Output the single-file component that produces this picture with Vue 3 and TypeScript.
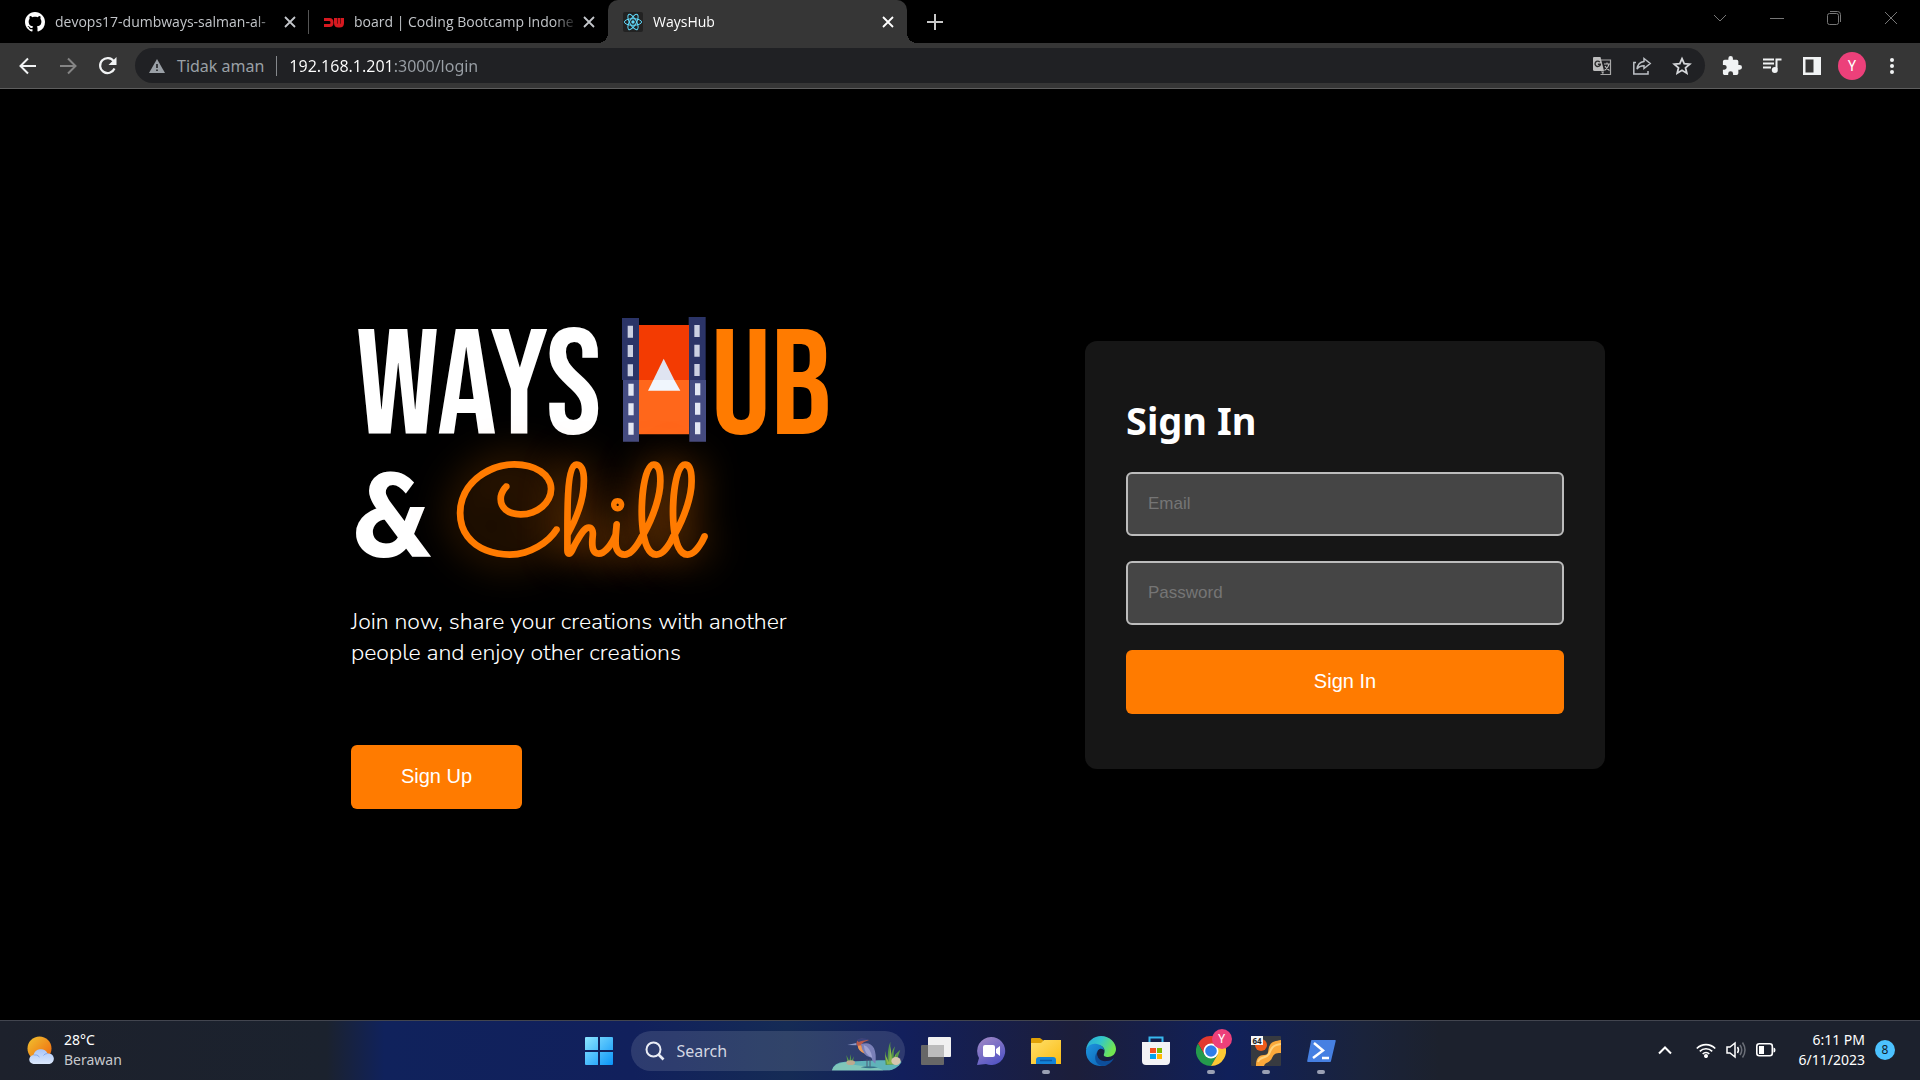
<script setup lang="ts">
import { ref } from 'vue'

interface Tab {
  id: string
  title: string
  icon: 'github' | 'dw' | 'react'
  active: boolean
}

const tabs: Tab[] = [
  { id: 'repo', title: 'devops17-dumbways-salman-al-', icon: 'github', active: false },
  { id: 'board', title: 'board | Coding Bootcamp Indone', icon: 'dw', active: false },
  { id: 'app', title: 'WaysHub', icon: 'react', active: true },
]

const address = ref('192.168.1.201:3000/login')
const query = ref('')
const email = ref('')
const password = ref('')
</script>

<template>
  <div class="screen">
    <header class="browser">
      <div class="tabstrip">
        <div v-for="tab in tabs" :key="tab.id" class="tab" :class="{ active: tab.active }">
          <svg v-if="tab.icon === 'github'" class="favicon" viewBox="0 0 16 16" fill="#fff">
            <path d="M8 0C3.58 0 0 3.58 0 8c0 3.54 2.29 6.53 5.47 7.59.4.07.55-.17.55-.38 0-.19-.01-.82-.01-1.49-2.01.37-2.53-.49-2.69-.94-.09-.23-.48-.94-.82-1.13-.28-.15-.68-.52-.01-.53.63-.01 1.08.58 1.23.82.72 1.21 1.87.87 2.33.66.07-.52.28-.87.51-1.07-1.78-.2-3.64-.89-3.64-3.95 0-.87.31-1.59.82-2.15-.08-.2-.36-1.02.08-2.12 0 0 .67-.21 2.2.82.64-.18 1.32-.27 2-.27s1.36.09 2 .27c1.53-1.04 2.2-.82 2.2-.82.44 1.1.16 1.92.08 2.12.51.56.82 1.27.82 2.15 0 3.07-1.87 3.75-3.65 3.95.29.25.54.73.54 1.48 0 1.07-.01 1.93-.01 2.2 0 .21.15.46.55.38A8.01 8.01 0 0 0 16 8c0-4.42-3.58-8-8-8z" />
          </svg>
          <svg v-else-if="tab.icon === 'dw'" class="favicon" viewBox="0 0 20 20" fill="none" stroke="#d71920" stroke-width="3">
            <path d="M0 7.500h5.500q2.500 0 2.500 3t-2.500 3H0M11.500 6v5q0 3 3 3h1q3 0 3-3V6M15 6v7" />
          </svg>
          <svg v-else class="favicon" viewBox="0 0 20 20">
            <rect width="20" height="20" rx="2" fill="#222" />
            <g fill="none" stroke="#61dafb" stroke-width="1">
              <ellipse cx="10" cy="10" rx="8.600" ry="3.300" />
              <ellipse cx="10" cy="10" rx="8.600" ry="3.300" transform="rotate(60 10 10)" />
              <ellipse cx="10" cy="10" rx="8.600" ry="3.300" transform="rotate(120 10 10)" />
            </g>
            <circle cx="10" cy="10" r="1.700" fill="#61dafb" />
          </svg>
          <span class="tab-title">{{ tab.title }}</span>
          <button class="icon-button tab-close" type="button" aria-label="Close tab">
            <svg width="12" height="12" viewBox="0 0 12 12" fill="none" stroke="currentColor" stroke-width="1.800"><path d="M1 1l10 10M11 1L1 11" /></svg>
          </button>
        </div>
        <button class="icon-button new-tab" type="button" aria-label="New tab">
          <svg width="16" height="16" viewBox="0 0 16 16" fill="none" stroke="#c8c8c8" stroke-width="2"><path d="M8 0v16M0 8h16" /></svg>
        </button>
        <div class="window-controls">
          <button class="icon-button" type="button" aria-label="Search tabs">
            <svg width="14" height="14" viewBox="0 0 14 14"><path d="M1 4l6 6 6-6" /></svg>
          </button>
          <button class="icon-button" type="button" aria-label="Minimize">
            <svg width="14" height="14" viewBox="0 0 14 14"><path d="M0 7.500h14" /></svg>
          </button>
          <button class="icon-button" type="button" aria-label="Restore">
            <svg width="14" height="14" viewBox="0 0 14 14"><rect x=".5" y="2.500" width="11" height="11" rx="2" /><path d="M3 .5h7.500a3 3 0 0 1 3 3V11" /></svg>
          </button>
          <button class="icon-button" type="button" aria-label="Close">
            <svg width="14" height="14" viewBox="0 0 14 14"><path d="M1 1l12 12M13 1L1 13" /></svg>
          </button>
        </div>
      </div>

      <div class="toolbar">
        <button class="icon-button nav" type="button" aria-label="Back">
          <svg width="18" height="18" viewBox="0 0 18 18" fill="none" stroke="#f1f3f4" stroke-width="2"><path d="M17 9H2M9 1.500L1.500 9 9 16.500" /></svg>
        </button>
        <button class="icon-button nav" type="button" aria-label="Forward">
          <svg width="18" height="18" viewBox="0 0 18 18" fill="none" stroke="#858585" stroke-width="2"><path d="M1 9h15M9 1.500L16.500 9 9 16.500" /></svg>
        </button>
        <button class="icon-button nav" type="button" aria-label="Reload">
          <svg width="20" height="20" viewBox="0 0 20 20"><path d="M16.500 12.500A7.500 7.500 0 1 1 15.800 5.300" fill="none" stroke="#f1f3f4" stroke-width="2.200" /><path d="M18.500 1v8h-8z" fill="#f1f3f4" /></svg>
        </button>
        <div class="omnibox">
          <svg width="16" height="14" viewBox="0 0 16 14"><path d="M8 0l8 14H0z" fill="#9aa0a6" /><path d="M7.200 5h1.600v4H7.200zM7.200 10.400h1.600V12H7.200z" fill="#202124" /></svg>
          <span class="insecure">Tidak aman</span>
          <span class="divider"></span>
          <input v-model="address" class="address" type="text" aria-label="Address" spellcheck="false" />
          <button class="icon-button action" type="button" aria-label="Translate">
            <svg width="20" height="20" viewBox="0 0 20 20" fill="none">
              <path d="M9 4h9.500v14.500H8.500" stroke="#a8a8a8" stroke-width="1.200" />
              <path d="M1.500 1h7l3.500 14H2.500A1.500 1.500 0 0 1 1 13.500v-12z" fill="#bdbdbd" />
              <path d="M7.800 6.100A2.700 2.700 0 1 0 8.400 8.300H5.900" stroke="#2b2b2b" stroke-width="1.400" />
              <path d="M12 8h6M15 6.500V8M17 8c-.5 3-2.500 5-4.500 6.500M13 10c1 2 2.500 3.500 4.500 4.500" stroke="#bdbdbd" stroke-width="1.100" />
              <path d="M9 15.500l2 3 1-3z" fill="#a8a8a8" />
            </svg>
          </button>
          <button class="icon-button action" type="button" aria-label="Share">
            <svg width="20" height="20" viewBox="0 0 20 20" fill="none" stroke="#bdc1c6" stroke-width="1.500"><path d="M4 6.500H1.800V18H16v-3M12 2.500l6.200 5-6.200 5V9.700c-3.500 0-5.500 1-7 3.300.5-4 2.500-7 7-7.600z" /></svg>
          </button>
          <button class="icon-button action" type="button" aria-label="Bookmark">
            <svg width="20" height="20" viewBox="0 0 20 20" fill="none" stroke="#d5d7da" stroke-width="1.800"><path d="M10 2.700l2.200 5 5.500.5-4.200 3.600 1.300 5.400-4.800-2.900-4.800 2.900 1.300-5.400-4.200-3.600 5.500-.5z" /></svg>
          </button>
        </div>
        <button class="icon-button ext" type="button" aria-label="Extensions">
          <svg width="20" height="20" viewBox="1 1 22 22" fill="#f1f3f4"><path d="M20.500 11H19V7a2 2 0 0 0-2-2h-4V3.500a2.500 2.500 0 0 0-5 0V5H4a2 2 0 0 0-2 2v3.800h1.500a2.700 2.700 0 0 1 0 5.400H2V20c0 1.100.9 2 2 2h3.800v-1.500a2.700 2.700 0 0 1 5.400 0V22H17a2 2 0 0 0 2-2v-4h1.500a2.500 2.500 0 0 0 0-5z" /></svg>
        </button>
        <button class="icon-button ext" type="button" aria-label="Media">
          <svg width="20" height="20" viewBox="0 0 20 20"><path d="M1 3.500h11M1 7.500h11M1 11.500h8" stroke="#f1f3f4" stroke-width="1.800" /><path d="M14.500 13V3.500h5" fill="none" stroke="#f1f3f4" stroke-width="2" /><circle cx="12.800" cy="14" r="3" fill="#f1f3f4" /></svg>
        </button>
        <button class="icon-button ext" type="button" aria-label="Side panel">
          <svg width="20" height="20" viewBox="0 0 20 20"><path fill="#f1f3f4" fill-rule="evenodd" d="M1 1h18v18H1zM3.500 3.500v13h8v-13z" /></svg>
        </button>
        <button class="icon-button ext" type="button" aria-label="Profile"><span class="avatar">Y</span></button>
        <button class="icon-button ext" type="button" aria-label="Menu">
          <svg width="20" height="20" viewBox="0 0 20 20" fill="#f1f3f4"><circle cx="10" cy="4" r="2" /><circle cx="10" cy="10" r="2" /><circle cx="10" cy="16" r="2" /></svg>
        </button>
      </div>
    </header>

    <main class="page">
      <div class="content">
        <section class="hero">
          <h1 class="logo">
            <span class="logo-top">
              <span class="ways">WAYS</span>
              <svg class="film" width="84" height="125" viewBox="846 51 252 375" aria-hidden="true">
                <path d="M846 54h51v186h-51zM1046 51h51v189h-51z" fill="#2b3467" />
                <path d="M849 240h48v185h-48zM1048 240h50v185h-50z" fill="#444b81" />
                <path d="M897 75h150v165H897z" fill="#f33b02" />
                <path d="M897 240h150v163H897z" fill="#ff671b" />
                <path d="M863 77h16v36h-16zM863 135h16v36h-16zM863 193h16v36h-16zM1063 75h16v36h-16zM1063 134h16v36h-16zM1063 192h16v36h-16z" fill="#cbd0e2" />
                <path d="M865 251h16v36h-16zM865 310h16v36h-16zM865 368h16v36h-16zM1065 250h16v36h-16zM1065 308h16v36h-16zM1065 367h16v36h-16z" fill="#e2e6f3" />
                <path d="M971 176l32 64h-63z" fill="#dfe4f1" />
                <path d="M940 240h63l18 32h-97z" fill="#f0f6fd" />
              </svg>
              <span class="hub">UB</span>
            </span>
            <span class="logo-bottom">
              <span class="amp">&amp;</span>
              <span class="chill">Chill</span>
            </span>
          </h1>
          <p class="tagline">Join now, share your creations with another<br />people and enjoy other creations</p>
          <button class="primary signup" type="button">Sign Up</button>
        </section>

        <form class="card" @submit.prevent>
          <h2>Sign In</h2>
          <input v-model="email" type="email" placeholder="Email" aria-label="Email" />
          <input v-model="password" type="password" placeholder="Password" aria-label="Password" />
          <button class="primary" type="submit">Sign In</button>
        </form>
      </div>
    </main>

    <footer class="taskbar">
      <button class="weather" type="button">
        <svg width="28" height="28" viewBox="0 0 28 28">
          <defs>
            <linearGradient id="sun" x1="0" y1="0" x2="1" y2="1"><stop stop-color="#f0c330" /><stop offset="1" stop-color="#f0620c" /></linearGradient>
            <linearGradient id="cloud" x1="0" y1="0" x2="0" y2="1"><stop stop-color="#a9c5fa" /><stop offset="1" stop-color="#dce8fb" /></linearGradient>
          </defs>
          <circle cx="12.500" cy="12.500" r="12" fill="url(#sun)" />
          <path d="M7 28a4.500 4.500 0 0 1-.5-9A7.500 7.500 0 0 1 20.500 17.500 5.300 5.300 0 0 1 22.500 28z" fill="url(#cloud)" />
          <path d="M6.500 19q4-1 6 2M20.500 17.500q-3 0-4 2" fill="none" stroke="#83a8ec" stroke-width="1" />
        </svg>
        <span class="weather-text"><span>28°C</span><span class="muted">Berawan</span></span>
      </button>

      <nav class="dock" aria-label="Taskbar">
        <button class="app" type="button" aria-label="Start">
          <svg width="30" height="30" viewBox="0 0 30 30">
            <defs><linearGradient id="win" x1="0" y1="0" x2="1" y2="1"><stop stop-color="#8ce5ff" /><stop offset="1" stop-color="#0a94f8" /></linearGradient></defs>
            <path d="M2 1h12v13H1V2a1 1 0 0 1 1-1zM16 1h12a1 1 0 0 1 1 1v12H16zM1 16h13v13H2a1 1 0 0 1-1-1zM16 16h13v12a1 1 0 0 1-1 1H16z" fill="url(#win)" />
          </svg>
        </button>
        <label class="search">
          <svg class="lens" width="20" height="20" viewBox="0 0 20 20" fill="none" stroke="#e9ecf5" stroke-width="2"><circle cx="8.500" cy="8.500" r="7" /><path d="M13.500 13.500l5 5" stroke-width="2.600" /></svg>
          <input v-model="query" type="text" placeholder="Search" aria-label="Search" />
          <svg class="heron" width="74" height="34" viewBox="816 74 222 102">
            <path d="M819 174q4-24 40-26l100-4h60q12 2 8 16-12 16-40 14z" fill="#5fb3b9" />
            <path d="M819 174q6-22 44-25 22 12 60 12 30 2 50 13z" fill="#80c6b9" />
            <path d="M924 140v26M933 140v26" stroke="#4b4a6e" stroke-width="2.500" />
            <path d="M905 165q20-6 52 0-22 6-52 0z" fill="#35718a" />
            <path d="M892 92l-27 6 28 1z" fill="#8e99c8" />
            <path d="M892 94q2-16 18-15l20 4-16 7q-12 8-2 20l8 12q-18-4-23-18z" fill="#b95a4b" />
            <path d="M893 83q14-10 36-1-20 2-30 7z" fill="#3a427c" />
            <path d="M906 96q26-10 39 12 8 18 4 46-10-8-12-18-26-2-31-40z" fill="#7b80b8" />
            <path d="M914 98q20 6 26 38-22-6-26-38z" fill="#a0a2d2" />
            <path d="M897 100q-2 14 20 24-10-12-10-25z" fill="#eb9a5b" />
            <path d="M980 158q-3-30 0-42 1 20 6 34-1-40 8-62 0 30 0 52 4-26 14-38-6 20-4 34 8-16 20-24-8 22-14 44zM866 154l-4-26 9 18 4-20 2 20 8-14-5 22z" fill="#55964a" />
            <path d="M984 156l-6-30 12 24 4-48 6 46 12-26-6 34z" fill="#8bb64c" />
            <ellipse cx="1011" cy="146" rx="14" ry="12" fill="#d6c6ae" /><ellipse cx="875" cy="151" rx="13" ry="7" fill="#bca98f" />
          </svg>
        </label>
        <button class="app" type="button" aria-label="Task view">
          <svg width="30" height="30" viewBox="0 0 30 30"><rect y="9" width="23" height="20" rx="1" fill="#676767" /><rect x="7" y="1" width="23" height="20" rx="1" fill="#f1f1f1" /><path d="M7 9h16v12H7z" fill="#bcbcbc" /></svg>
        </button>
        <button class="app" type="button" aria-label="Chat">
          <svg width="30" height="30" viewBox="0 0 30 30">
            <defs><linearGradient id="chat" x1="0" y1="0" x2=".6" y2="1"><stop stop-color="#a58cc6" /><stop offset="1" stop-color="#5556c5" /></linearGradient></defs>
            <path d="M15 1a14 14 0 1 1-5 27L1 29l2-7A14 14 0 0 1 15 1z" fill="url(#chat)" /><rect x="7" y="9" width="12" height="12" rx="2" fill="#fff" /><path d="M20 13l4-3v10l-4-3z" fill="#fff" />
          </svg>
        </button>
        <button class="app running" type="button" aria-label="File Explorer">
          <svg width="30" height="30" viewBox="0 0 30 30">
            <defs><linearGradient id="folder" x1="0" y1="0" x2="1" y2="1"><stop stop-color="#ffdf6b" /><stop offset="1" stop-color="#fabc13" /></linearGradient></defs>
            <path d="M0 3q0-1 1-1h8l4 3-2 5H0z" fill="#e0a106" /><path d="M0 7h10l3-3h17v24H0z" fill="url(#folder)" /><path d="M5 28v-4q0-3 3-3h14q3 0 3 3v4z" fill="#1383d8" /><path d="M9 24.500h12" stroke="#0b58a6" stroke-width="1.500" />
          </svg>
        </button>
        <button class="app" type="button" aria-label="Edge">
          <svg width="30" height="30" viewBox="0 0 30 30">
            <defs>
              <linearGradient id="edge-top" x1="0" y1="0" x2="1" y2=".4"><stop stop-color="#27a6dc" /><stop offset=".5" stop-color="#32c6cc" /><stop offset="1" stop-color="#72e650" /></linearGradient>
              <linearGradient id="edge-side" x1="0" y1="0" x2="1" y2="1"><stop stop-color="#1e94df" /><stop offset="1" stop-color="#0b62b3" /></linearGradient>
            </defs>
            <path d="M0 14C1 5 8 0 15 0c9 0 15 7 15 13 0 5-4 8-8 8-3 0-5-1-4-3 2-5-1-9-7-9C6 9 2 11 0 14z" fill="url(#edge-top)" />
            <path d="M0 14C2 9 6 7 11 8c5 1 7 4 7 6-4-3-7 0-7 4 0 6 5 10 10 11C9 33-1 25 0 14z" fill="url(#edge-side)" />
            <path d="M11 16c-1 6 4 10 10 9 3 0 5-1 7-3-2 4-6 8-12 8C10 29 7 22 11 16z" fill="#0d4e9b" />
          </svg>
        </button>
        <button class="app" type="button" aria-label="Store">
          <svg width="30" height="30" viewBox="0 0 30 30"><path d="M8.500 7V1.500h13V7" fill="none" stroke="#37b8ee" stroke-width="2" /><path d="M1 6h28v19q0 4-4 4H5q-4 0-4-4z" fill="#f3f3f5" /><path d="M9 12h6v5H9z" fill="#f25022" /><path d="M16 12h5v5h-5z" fill="#7fba00" /><path d="M9 18h6v5H9z" fill="#00a4ef" /><path d="M16 18h5v5h-5z" fill="#ffb900" /></svg>
        </button>
        <button class="app running" type="button" aria-label="Chrome">
          <svg width="30" height="30" viewBox="0 0 30 30"><path d="M2 7.500A15 15 0 0 1 28 7.500H15L8.500 18.800z" fill="#e2392f" /><path d="M2 7.500A15 15 0 0 0 15 30l6.500-11.200L8.500 18.800z" fill="#249a4c" /><path d="M28 7.500A15 15 0 0 1 15 30l6.500-11.200L15 7.500z" fill="#fcc934" /><circle cx="15" cy="15" r="7.500" fill="#fff" /><circle cx="15" cy="15" r="5.800" fill="#2f7de9" /></svg>
          <span class="profile-badge">Y</span>
        </button>
        <button class="app running" type="button" aria-label="PuTTY">
          <svg width="30" height="30" viewBox="0 0 30 30"><rect width="30" height="30" rx="1" fill="#373a40" /><circle cx="10" cy="9" r="6" fill="#ef5b1b" /><path d="M5 30c0-7 2-11 8-11 6 0 3-5 6-10 2-4 6-4 11-5v13c-6 0-7 1-9 5-2 5-7 4-8 8z" fill="#fba93b" /><path d="M7 26c2-6 8-3 11-8 2-5 3-9 12-10" fill="none" stroke="#ffd27a" stroke-width="2" /><rect width="12" height="9" fill="#f6f6f6" /><text x="6" y="8" text-anchor="middle" class="sixtyfour">64</text></svg>
        </button>
        <button class="app running" type="button" aria-label="PowerShell">
          <svg width="30" height="30" viewBox="0 0 30 30"><path d="M6 4h23q1 0 .7 1L25 25q0 1-1 1H2q-1 0-.8-1L5 5q0-1 1-1z" fill="#4680e2" /><path d="M8 7l9 7.500L7 22M16 22h7" fill="none" stroke="#fff" stroke-width="2.500" /></svg>
        </button>
      </nav>

      <div class="tray">
        <button class="icon-button chevron" type="button" aria-label="Show hidden icons">
          <svg width="16" height="16" viewBox="0 0 16 16" fill="none" stroke="#fff" stroke-width="2"><path d="M2 11.500l6-6 6 6" /></svg>
        </button>
        <button class="icon-button status" type="button" aria-label="Network, volume and battery">
          <svg width="20" height="16" viewBox="0 0 20 16" fill="none" stroke="#fff" stroke-width="1.700"><path d="M.8 6.500a13 13 0 0 1 18.400 0M3.800 9.300a8.800 8.800 0 0 1 12.400 0M6.700 12a4.800 4.800 0 0 1 6.600 0" /><circle cx="10" cy="14" r="1.200" fill="#fff" /></svg>
          <svg width="20" height="18" viewBox="0 0 20 18" fill="none" stroke="#fff" stroke-width="1.500"><path d="M1 6v6h3l5 4V2L4 6zM11.500 6q2 3 0 6" /><path d="M14 4q3.500 5 0 10M16.500 1.500q5 7.500 0 15" stroke="#6b6f78" /></svg>
          <svg width="20" height="14" viewBox="0 0 20 14"><rect x=".8" y=".8" width="15.500" height="12" rx="2.500" fill="none" stroke="#fff" stroke-width="1.600" /><path d="M3 3h5v8H3zM17.500 4.500q2 0 2 2.500t-2 2.500z" fill="#fff" /></svg>
        </button>
        <time class="clock" datetime="2023-06-11T18:11"><span>6:11 PM</span><span>6/11/2023</span></time>
        <button class="count" type="button" aria-label="Notifications">8</button>
      </div>
    </footer>
  </div>
</template>

<style>
html,
body {
  margin: 0;
  background: #000;
}
</style>

<style scoped>
.screen {
  display: flex;
  flex-direction: column;
  min-height: 100vh;
  background: #000;
  color: #fff;
  font-family: "Noto Sans", "Open Sans", sans-serif;
  font-size: 14px;
}
.screen *,
.screen *::before,
.screen *::after {
  box-sizing: border-box;
}
svg {
  display: block;
  flex: none;
}
button,
input {
  font: inherit;
}
.icon-button {
  display: flex;
  align-items: center;
  justify-content: center;
  flex: none;
  padding: 0;
  border: 0;
  background: none;
  color: inherit;
}

/* Tab strip */
.tabstrip {
  display: flex;
  height: 43px;
}
.tab {
  position: relative;
  display: flex;
  align-items: center;
  gap: 10px;
  width: 299px;
  padding: 0 12px 0 15px;
  color: #c3c6ca;
}
.tab:first-child {
  width: 309px;
  padding-left: 25px;
}
.tab:first-child::after {
  content: "";
  position: absolute;
  right: 0;
  top: 10px;
  width: 1px;
  height: 24px;
  background: #555;
}
.tab.active {
  border-radius: 10px 10px 0 0;
  background: #363636;
  color: #fff;
}
.tab.active::before,
.tab.active::after {
  content: "";
  position: absolute;
  bottom: 0;
  width: 10px;
  height: 10px;
}
.tab.active::before {
  right: 100%;
  background: radial-gradient(circle at 0 0, #000 10px, #363636 10px);
}
.tab.active::after {
  left: 100%;
  background: radial-gradient(circle at 100% 0, #000 10px, #363636 10px);
}
.favicon {
  width: 20px;
  height: 20px;
}
.tab-title {
  flex: 1;
  min-width: 0;
  font-family: "Open Sans", "Noto Sans", sans-serif;
  white-space: nowrap;
  line-height: 20px;
  -webkit-mask-image: linear-gradient(90deg, #000 200px, transparent 224px);
  mask-image: linear-gradient(90deg, #000 200px, transparent 224px);
}
.tab-close {
  width: 14px;
  height: 20px;
  margin-left: -6px;
}
.new-tab {
  width: 56px;
}
.window-controls {
  display: flex;
  margin: 0 1px 0 auto;
  height: 36px;
}
.window-controls .icon-button {
  width: 57px;
}
.window-controls svg {
  fill: none;
  stroke: #777;
}

/* Toolbar */
.toolbar {
  display: flex;
  align-items: center;
  height: 46px;
  padding: 0 8px;
  border-bottom: 1px solid #5e5e5e;
  background: #363636;
}
.nav {
  width: 40px;
  height: 36px;
}
.ext {
  width: 40px;
  height: 36px;
}
.omnibox {
  display: flex;
  align-items: center;
  flex: 1;
  height: 35px;
  margin: 0 7px;
  padding: 0 3px 0 14px;
  border-radius: 18px;
  background: #202124;
  font-size: 16px;
}
.insecure {
  margin-left: 12px;
  color: #9aa0a6;
}
.divider {
  width: 1px;
  height: 20px;
  margin: 0 12px;
  background: #85888c;
}
.address {
  flex: 1;
  min-width: 0;
  padding: 0;
  border: 0;
  outline: 0;
  background: linear-gradient(90deg, #fff 105px, #9aa0a6 105px);
  -webkit-background-clip: text;
  background-clip: text;
  -webkit-text-fill-color: transparent;
}
.action {
  width: 40px;
}
.avatar {
  width: 28px;
  height: 28px;
  border-radius: 50%;
  background: #ec407a;
  font-family: Roboto, sans-serif;
  line-height: 28px;
  text-align: center;
}

/* Landing page */
.page {
  display: flex;
  align-items: center;
  justify-content: center;
  flex: 1;
}
.content {
  display: flex;
  align-items: center;
  justify-content: space-between;
  gap: 40px;
  width: 100%;
  max-width: 1290px;
  padding-left: 36px;
}
.hero {
  padding-top: 16px;
}
.logo {
  margin: 0;
  font-size: 149px;
  font-weight: 400;
  line-height: 109px;
}
.logo-top {
  display: flex;
  align-items: center;
  height: 125px;
  padding-left: 5px;
  font-family: "Bebas Neue", "DejaVu Sans Condensed", sans-serif;
}
.ways,
.hub {
  padding-top: 20px;
}
.ways {
  width: 266px;
}
.film {
  margin-right: 5px;
}
.hub {
  color: #ff7b00;
}
.logo-bottom {
  display: flex;
  align-items: center;
  gap: 20px;
  height: 164px;
  padding-top: 12px;
}
.amp {
  font-family: "Josefin Sans", Lato, sans-serif;
  font-size: 112px;
  font-weight: 700;
}
.chill {
  color: #ff7b00;
  font-family: "Sacramento", "Dancing Script", "Liberation Serif", serif;
  font-size: 128px;
  text-shadow: 0 0 40px #ff7b00;
  -webkit-text-stroke: 2px #ff7b00;
}
.tagline {
  margin: 0 0 77px;
  font-family: "Nunito Sans", Lato, sans-serif;
  font-size: 23px;
  font-variant-ligatures: none;
  font-weight: 300;
  line-height: 31px;
}
.primary {
  display: block;
  height: 64px;
  border: 0;
  border-radius: 6px;
  background: #ff7b00;
  color: #fff;
  font-family: "Liberation Sans", Arial, sans-serif;
  font-size: 20px;
}
.signup {
  width: 171px;
}
.card {
  display: flex;
  flex-direction: column;
  gap: 25px;
  width: 520px;
  padding: 53px 41px 55px;
  border-radius: 12px;
  background: #161616;
}
.card h2 {
  margin: 0;
  font-size: 38px;
  font-weight: 700;
  line-height: 53px;
}
.card input {
  height: 64px;
  padding: 0 20px;
  border: 2px solid #bcbcbc;
  border-radius: 6px;
  outline: 0;
  background: #454545;
  color: #fff;
  font-family: "Liberation Sans", Arial, sans-serif;
  font-size: 17px;
}
.card input::placeholder {
  color: #757575;
  opacity: 1;
}

/* Taskbar */
.taskbar {
  display: grid;
  grid-template-columns: 1fr auto 1fr;
  align-items: center;
  height: 60px;
  border-top: 1px solid #42454f;
  background: linear-gradient(90deg, #1d212c 0, #1b222e 17%, #10225c 20%, #11205c 33%, #152b55 41%, #121f5c 47%, #1c1e3a 56%, #10205a 64%, #1a233b 71%, #1c212d 75%);
}
.weather {
  display: flex;
  align-items: center;
  justify-self: start;
  gap: 9px;
  padding: 0 0 2px 27px;
  border: 0;
  background: none;
  color: #fff;
  text-align: left;
}
.weather-text,
.clock {
  display: flex;
  flex-direction: column;
  line-height: 20px;
}
.muted {
  color: #c6c8cc;
}
.dock {
  display: flex;
  align-items: center;
}
.app {
  position: relative;
  display: flex;
  align-items: center;
  justify-content: center;
  width: 55px;
  height: 59px;
  padding: 0;
  border: 0;
  background: none;
}
.running::after {
  content: "";
  position: absolute;
  bottom: 6px;
  width: 8px;
  height: 4px;
  border-radius: 2px;
  background: #9aa0b4;
}
.profile-badge {
  position: absolute;
  right: 7px;
  top: 8px;
  width: 20px;
  height: 20px;
  border-radius: 50%;
  background: #ec407a;
  color: #fff;
  font-family: Roboto, sans-serif;
  font-size: 12px;
  line-height: 20px;
}
.sixtyfour {
  fill: #222;
  font-size: 8px;
  font-weight: 700;
}
.search {
  display: flex;
  align-items: center;
  width: 274px;
  height: 40px;
  margin: 0 4px;
  padding-left: 14px;
  overflow: hidden;
  border-radius: 20px;
  background: rgba(255, 255, 255, 0.12);
  font-size: 16px;
}
.search input {
  flex: 1;
  min-width: 0;
  padding: 0 0 0 12px;
  border: 0;
  outline: 0;
  background: none;
  color: #fff;
}
.search input::placeholder {
  color: #d4d7e2;
  opacity: 1;
}
.heron {
  align-self: flex-end;
}
.tray {
  display: flex;
  align-items: center;
  justify-self: end;
  padding: 0 25px 2px 0;
}
.status {
  gap: 10px;
  margin: 0 21px 0 23px;
}
.clock {
  width: 68px;
  text-align: right;
}
.count {
  width: 20px;
  height: 20px;
  margin-left: 10px;
  padding: 0;
  border: 0;
  border-radius: 50%;
  background: #4cc2ff;
  color: #10202c;
  font-size: 12px;
  line-height: 20px;
}
</style>
